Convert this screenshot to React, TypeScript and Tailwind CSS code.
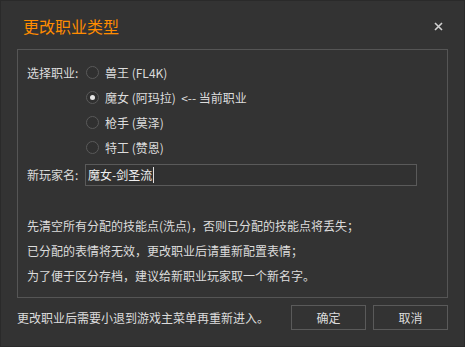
import React from "react";

const font = { fontFamily: '"Noto Sans CJK SC", "Noto Sans", sans-serif' };

function Radio({ checked, label }: { checked?: boolean; label: React.ReactNode }) {
  return (
    <div className="flex h-[25px] items-center">
      <span className="ml-[1px] flex h-[13px] w-[13px] items-center justify-center rounded-full border border-[#5a5a5a] bg-[#303030]">
        {checked && <span className="h-[5px] w-[5px] rounded-full bg-[#e8e8e8]" />}
      </span>
      <span className="ml-[6px] whitespace-pre">{label}</span>
    </div>
  );
}

export default function App() {
  return (
    <div
      className="flex h-[347px] w-[465px] flex-col border border-[#2a2a2a] bg-[#333333] text-[12px] text-[#dcdcdc]"
      style={font}
    >
      <div className="flex h-[48px] items-start justify-between pl-[22px] pr-[21px] pt-[14px]">
        <span className="text-[16px] leading-[22px] text-[#ff8c00]">更改职业类型</span>
        <svg width="9" height="9" viewBox="0 0 9 9" className="mt-[7px]">
          <path d="M1 1L8 8M8 1L1 8" stroke="#d0d0d0" strokeWidth="1.6" />
        </svg>
      </div>
      <div className="mx-[16px] flex flex-col border border-[#555555] pb-[9px] pl-[9px] pt-[10px]">
        <div className="flex">
          <div className="flex h-[25px] w-[58px] items-center">选择职业:</div>
          <div className="flex flex-col">
            <Radio label="兽王 (FL4K)" />
            <Radio checked label="魔女 (阿玛拉)  <-- 当前职业" />
            <Radio label="枪手 (莫泽)" />
            <Radio label="特工 (赞恩)" />
          </div>
        </div>
        <div className="mt-[4px] flex items-center">
          <div className="w-[58px]">新玩家名:</div>
          <div className="flex h-[22px] w-[332px] items-center border border-[#5a5a5a] bg-[#313131] pl-[2px] text-[#f0f0f0]">
            <span>魔女-剑圣流</span>
            <span className="ml-[1px] h-[16px] w-[1px] bg-[#e0e0e0]" />
          </div>
        </div>
        <div className="mt-[27px] flex flex-col">
          <div className="flex h-[25px] items-center">先清空所有分配的技能点(洗点)，否则已分配的技能点将丢失；</div>
          <div className="flex h-[25px] items-center">已分配的表情将无效，更改职业后请重新配置表情；</div>
          <div className="flex h-[25px] items-center">为了便于区分存档，建议给新职业玩家取一个新名字。</div>
        </div>
      </div>
      <div className="mx-[16px] mt-[7px] flex items-center">
        <span className="flex-1">更改职业后需要小退到游戏主菜单再重新进入。</span>
        <button className="flex h-[25px] w-[75px] items-center justify-center border border-[#5a5a5a] bg-[#333333] text-[#dcdcdc]">
          确定
        </button>
        <button className="ml-[7px] flex h-[25px] w-[75px] items-center justify-center border border-[#5a5a5a] bg-[#333333] text-[#dcdcdc]">
          取消
        </button>
      </div>
    </div>
  );
}
